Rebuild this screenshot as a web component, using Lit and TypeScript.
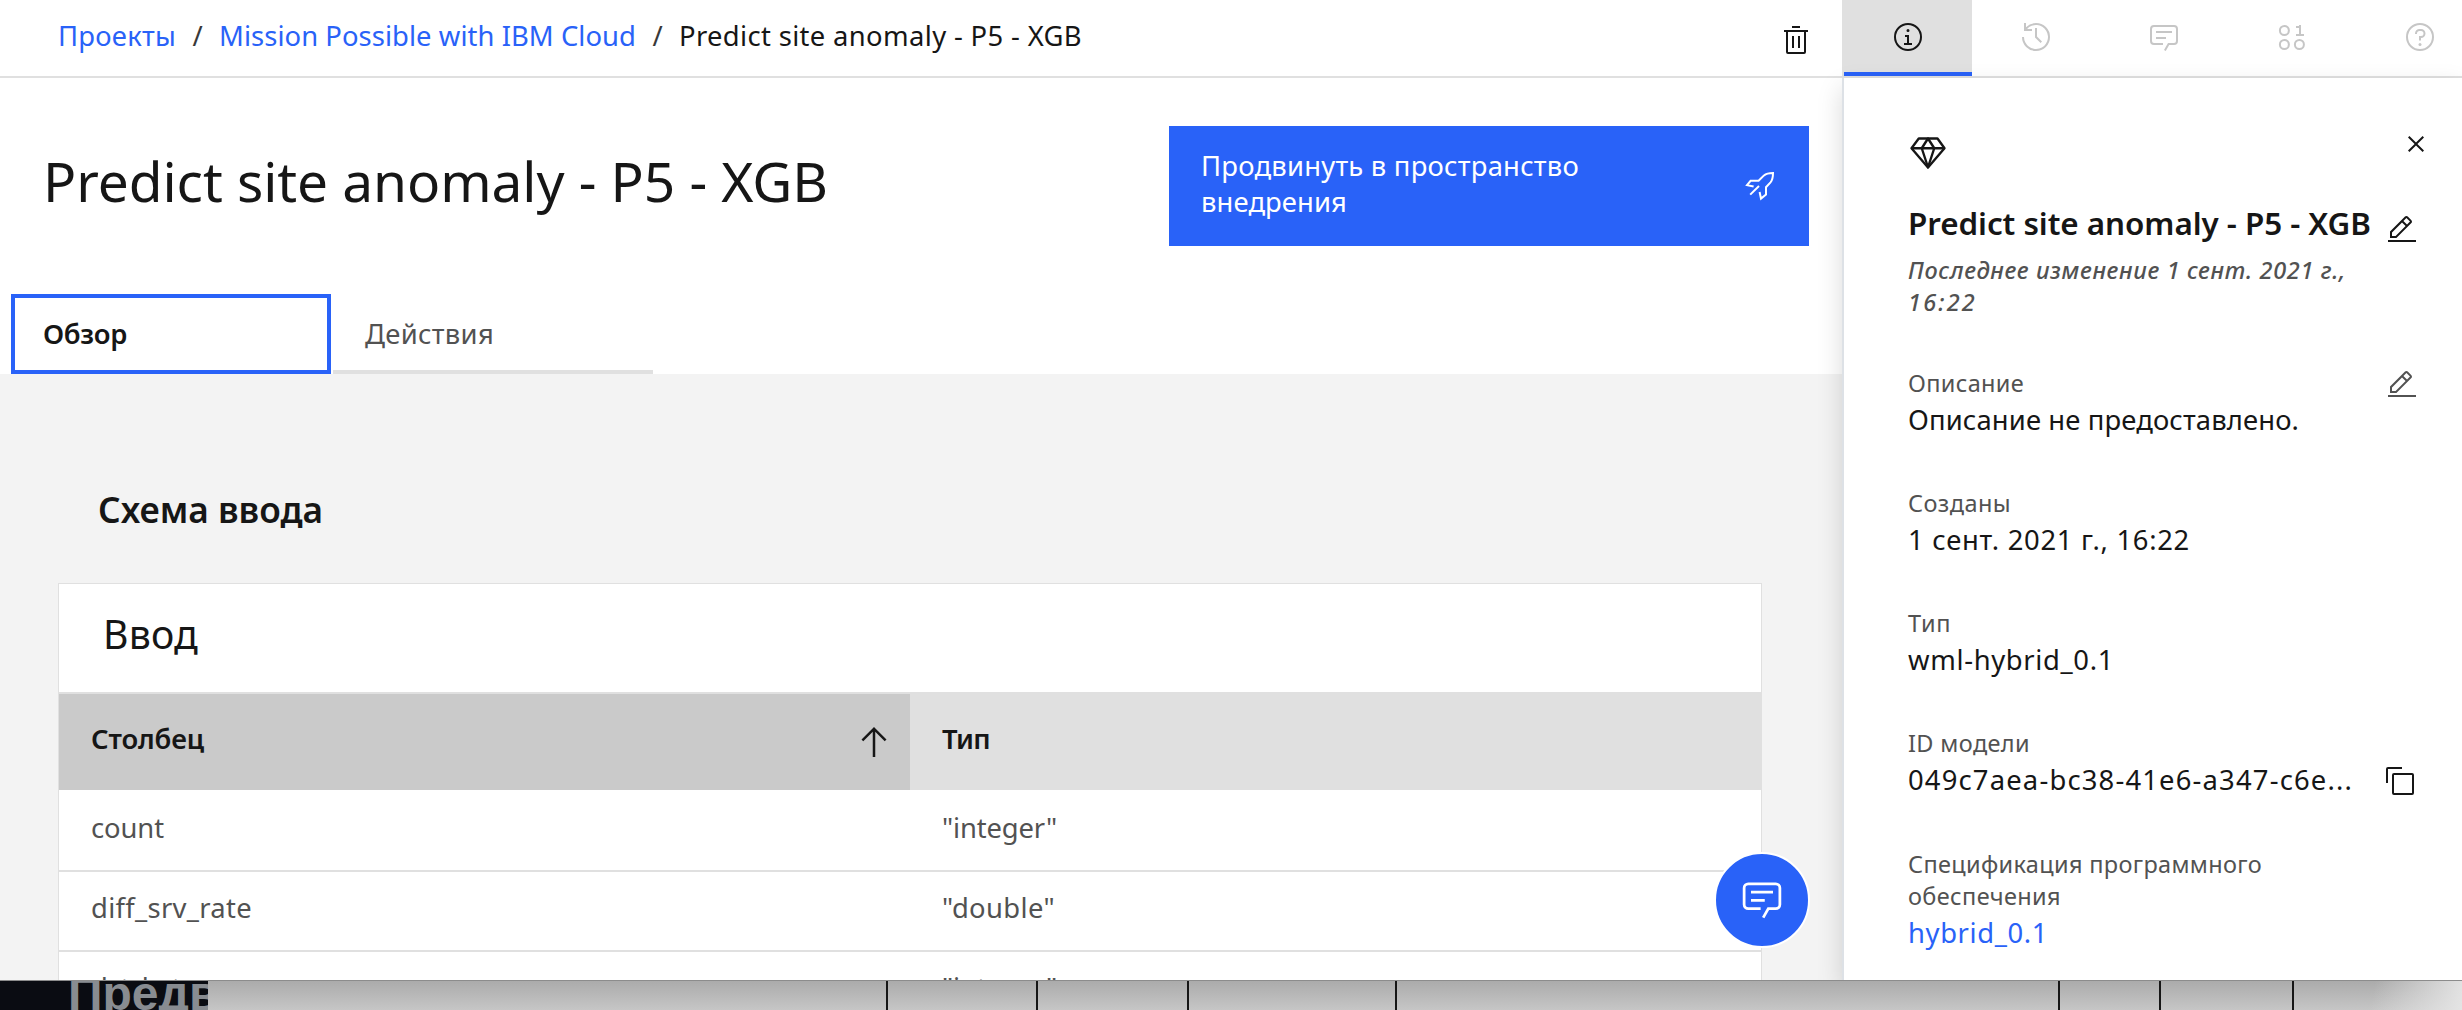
import { LitElement, html, css, svg, SVGTemplateResult } from "lit";
import { customElement, property, query } from "lit/decorators.js";
import { classMap } from "lit/directives/class-map.js";

const icons: Record<string, SVGTemplateResult> = {
  trash: svg`<path d="M12 12h2v12h-2zM18 12h2v12h-2z"/><path d="M4 6v2h2v20a2 2 0 002 2h16a2 2 0 002-2V8h2V6zM8 28V8h16v20zM12 2h8v2h-8z"/>`,
  info: svg`<path d="M17 22v-8h-4v2h2v6h-3v2h8v-2zM16 8a1.5 1.5 0 101.5 1.5A1.5 1.5 0 0016 8z"/><path d="M16 30a14 14 0 1114-14 14 14 0 01-14 14zm0-26a12 12 0 1012 12A12 12 0 0016 4z"/>`,
  history: svg`<path d="M20.59 22L15 16.41V7h2v8.58l5 5.01L20.59 22z"/><path d="M16 2A13.94 13.94 0 006 6.23V2H4v8h8V8H7.08A12 12 0 114 16H2A14 14 0 1016 2z"/>`,
  chat: svg`<path d="M17.74 30L16 29l4-7h6a2 2 0 002-2V8a2 2 0 00-2-2H6a2 2 0 00-2 2v12a2 2 0 002 2h9v2H6a4 4 0 01-4-4V8a4 4 0 014-4h20a4 4 0 014 4v12a4 4 0 01-4 4h-4.84z"/><path d="M8 10h16v2H8zM8 16h10v2H8z"/>`,
  data: svg`<g fill="none" stroke="currentColor" stroke-width="2"><circle cx="8.4" cy="9.5" r="4.5"/><circle cx="8.4" cy="23.5" r="4.5"/><circle cx="23.4" cy="23.5" r="4.5"/></g><path d="M25 13V4h-2v1h-3v2h3v6h-3v2h8v-2z"/>`,
  help: svg`<path d="M16 2a14 14 0 1014 14A14 14 0 0016 2zm0 26a12 12 0 1112-12 12 12 0 01-12 12z"/><circle cx="16" cy="23.5" r="1.5"/><path d="M17 8h-1.5a4.49 4.49 0 00-4.5 4.5v.5h2v-.5a2.5 2.5 0 012.5-2.5H17a2.5 2.5 0 010 5h-2v4.5h2V17a4.5 4.5 0 000-9z"/>`,
  rocket: svg`<g fill="none" stroke="currentColor" stroke-width="2"><path d="M9.6 16.6L3 15.2l3.6-4.4h8L20 5.4Q22.8 3 29 3q0 6.4-2.5 9.4L22 17.2v7.4l-5 4-1.4-6.6"/><path d="M6.2 24.6L15 16"/></g>`,
  gem: svg`<g fill="none" stroke="currentColor" stroke-width="1.9" stroke-linejoin="round"><path d="M8.6 6h15l5.6 7.8L16 29.2 2.8 13.8z"/><path d="M2.8 13.8h26.4M16 6l-5 7.8L16 29l5-15.2z"/></g>`,
  edit: svg`<path d="M2 26h28v2H2zM25.4 9c.8-.8.8-2 0-2.8l-3.6-3.6c-.8-.8-2-.8-2.8 0l-15 15V24h6.4zM20.4 4L24 7.6l-3 3L17.4 7zM6 22v-3.6l10-10 3.6 3.6-10 10z"/>`,
  copy: svg`<path d="M28 10v18H10V10h18m0-2H10a2 2 0 00-2 2v18a2 2 0 002 2h18a2 2 0 002-2V10a2 2 0 00-2-2z"/><path d="M4 18H2V4a2 2 0 012-2h14v2H4z"/>`,
  close: svg`<path d="M24 9.4L22.6 8 16 14.6 9.4 8 8 9.4l6.6 6.6L8 22.6 9.4 24l6.6-6.6 6.6 6.6 1.4-1.4-6.6-6.6z"/>`,
  up: svg`<path d="M16 4L6 14l1.41 1.41L15 7.83V28h2V7.83l7.59 7.58L26 14z"/>`,
};

const icon = (name: string, cls = "") =>
  html`<svg class="icon ${cls}" viewBox="0 0 32 32" fill="currentColor">${icons[name]}</svg>`;

/** One line of text, tracked so that it takes up the given advance width. */
@customElement("tracked-text")
class TrackedText extends LitElement {
  static styles = css`
    :host { display: inline-block; white-space: nowrap; }
  `;
  @property({ type: Number }) width = 0;
  @property() text = "";
  @query("span") span!: HTMLSpanElement;

  updated() {
    this.span.style.letterSpacing = "0";
    const natural = this.span.getBoundingClientRect().width;
    this.span.style.letterSpacing = `${(this.width - natural) / this.text.length}px`;
  }
  render() {
    return html`<span>${this.text}</span>`;
  }
}

const t = (text: string, width: number) =>
  html`<tracked-text .text=${text} .width=${width}></tracked-text>`;

const tools = ["info", "history", "chat", "data", "help"];

const rows: [string, number, string, number][] = [
  ["count", 73, '"integer"', 115],
  ["diff_srv_rate", 161, '"double"', 113],
  ["dst_bytes", 118, '"integer"', 115],
];

interface Detail {
  label: [string, number][];
  value: [string, number];
  labelIcon?: string;
  valueIcon?: string;
  link?: boolean;
}
const details: Detail[] = [
  { label: [["Описание", 116]], value: ["Описание не предоставлено.", 391], labelIcon: "edit" },
  { label: [["Созданы", 103]], value: ["1 сент. 2021 г., 16:22", 282] },
  { label: [["Тип", 43]], value: ["wml-hybrid_0.1", 206] },
  { label: [["ID модели", 122]], value: ["049c7aea-bc38-41e6-a347-c6e...", 445], valueIcon: "copy" },
  { label: [["Спецификация программного", 354], ["обеспечения", 153]], value: ["hybrid_0.1", 140], link: true },
];

@customElement("app-root")
class AppRoot extends LitElement {
  static styles = css`
    :host {
      display: block;
      height: 1010px;
      overflow: hidden;
      background: #fff;
      color: #161616;
      font: 400 27.4px/36px "Noto Sans", sans-serif;
    }
    * { box-sizing: border-box; }
    .icon { display: block; width: 32px; height: 32px; flex: none; }
    .window { height: 980px; display: flex; flex-direction: column; overflow: hidden; }

    .topbar { display: flex; height: 78px; flex: none; border-bottom: 2px solid #e0e0e0; }
    .crumbs { display: flex; align-items: center; width: 1842px; flex: none; padding: 4px 30px 0 58px; }
    .trail { display: flex; align-items: center; flex: 1; padding-bottom: 9px; }
    .link { color: #2962f8; }
    .slash { width: 43px; text-align: center; color: #393939; }
    .tools { display: flex; border-left: 2px solid #e0e0e0; flex: none; }
    .tool { display: flex; width: 128px; height: 76px; align-items: center; justify-content: center; color: #c6c6c6; padding-bottom: 2px; }
    .tool.active { background: #e0e0e0; color: #161616; border-bottom: 4px solid #2962f8; padding-top: 2px; padding-bottom: 0; }

    .body { display: flex; flex: 1; min-height: 0; }
    .main { position: relative; width: 1842px; flex: none; display: flex; flex-direction: column; }
    .hero { display: flex; justify-content: space-between; height: 216px; flex: none; padding: 48px 33px 0 43px; }
    h1 { margin: 0; font-weight: 400; font-size: 55px; line-height: 64px; padding-top: 23px; }
    .promote { display: flex; width: 640px; height: 120px; background: #2962f8; color: #fff; justify-content: space-between; align-items: center; padding: 0 33px 4px 32px; }
    .promote .lines { display: flex; flex-direction: column; }
    .promote .icon { margin-top: 4px; }

    .tabs { display: flex; gap: 2px; height: 80px; flex: none; padding-left: 11px; }
    .tab { display: flex; align-items: center; width: 320px; color: #525252; padding: 3px 0 0 32px; border-bottom: 4px solid #e0e0e0; }
    .tab.active { border: 4px solid #2962f8; color: #161616; font-weight: 600; padding: 0 0 0 28px; }

    .content { flex: 1; min-height: 0; background: #f3f3f3; overflow: hidden; }
    h2 { margin: 0; font-size: 35.3px; line-height: 48px; font-weight: 600; padding: 111px 0 0 98px; }
    .card { width: 1704px; margin: 50px 0 0 58px; border: 1px solid #e0e0e0; background: #fff; }
    .card-title { height: 108px; padding: 22px 0 0 44px; font-size: 39.2px; line-height: 56px; }
    .grid-row { display: grid; grid-template-columns: 851px 1fr; }
    .head { background: #e0e0e0; padding-top: 2px; font-weight: 600; }
    .th { display: flex; align-items: center; justify-content: space-between; height: 96px; padding: 0 16px 0 32px; }
    .th tracked-text { padding-bottom: 7px; }
    .th.sorted { background: #cacaca; }
    .th .icon { width: 40px; height: 40px; }
    .line { height: 80px; border-bottom: 2px solid #e0e0e0; color: #525252; }
    .line:nth-child(3) { height: 82px; padding-top: 2px; }
    .cell { padding: 18px 0 0 32px; }

    .fab { position: absolute; left: 1714px; top: 774px; width: 96px; height: 96px; border-radius: 50%; background: #2962f8; border: 2px solid #fff; color: #fff; display: flex; align-items: center; justify-content: center; }
    .fab .icon { width: 44px; height: 44px; margin-top: -2px; }

    .panel { position: relative; width: 620px; flex: none; background: #fff; border-left: 2px solid #dde1e6; padding: 50px 30px 0 64px; box-shadow: 0 10px 24px rgba(0, 0, 0, 0.15); }
    .panel-top { display: flex; justify-content: space-between; }
    .gem { width: 40px; height: 40px; margin-top: 3px; }
    .panel-line { display: flex; justify-content: space-between; padding-right: 14px; }
    h3 { margin: 0; font-size: 31.4px; line-height: 40px; font-weight: 600; padding-top: 32px; }
    .title-edit { margin-top: 43px; }
    .modified { display: flex; flex-direction: column; font-style: italic; font-weight: 500; font-size: 23.5px; line-height: 32px; color: #525252; padding-top: 8px; }
    .details { display: flex; flex-direction: column; gap: 49.3px; padding-top: 48.5px; }
    .label { display: flex; flex-direction: column; font-size: 23.5px; line-height: 32px; color: #525252; }
    .label-row { color: #525252; }
    .label-row .icon { margin: 2px 0 -2px; }
    .value-row { padding-top: 3px; height: 39px; padding-right: 16px; }
    .value-row .icon { margin-top: 3px; }

    .strip { position: relative; display: flex; height: 30px; border-top: 1px solid #8c8c8c; background: linear-gradient(#ababab, #c6c6c6); overflow: hidden; }
    .strip::after { content: ""; position: absolute; inset: 0 0 0 auto; width: 110px; background: linear-gradient(100deg, transparent 20%, #e4e4e4); }
    .preview { width: 208px; flex: none; overflow: hidden; background: #0a0c12; color: #888c91; font: 700 48px/54px "Liberation Sans", sans-serif; padding-left: 68px; white-space: nowrap; }
    .preview span { display: block; margin-top: -14px; }
    .ticks { display: grid; grid-template-columns: 680px 150px 151px 208px 663px 101px 133px; }
    .tick { border-right: 2px solid #161616; }
  `;

  render() {
    return html`
      <div class="window">
        <div class="topbar">
          <div class="crumbs">
            <div class="trail">
              <span class="link">${t("Проекты", 118)}</span><span class="slash">/</span>
              <span class="link">${t("Mission Possible with IBM Cloud", 417)}</span><span class="slash">/</span>
              <span>${t("Predict site anomaly - P5 - XGB", 403)}</span>
            </div>
            ${icon("trash")}
          </div>
          <div class="tools">
            ${tools.map((name, i) => html`<div class=${classMap({ tool: true, active: i === 0 })}>${icon(name)}</div>`)}
          </div>
        </div>
        <div class="body">
          <div class="main">
            <div class="hero">
              <h1>${t("Predict site anomaly - P5 - XGB", 785)}</h1>
              <div class="promote">
                <div class="lines">${t("Продвинуть в пространство", 378)}${t("внедрения", 146)}</div>
                ${icon("rocket")}
              </div>
            </div>
            <div class="tabs">
              <div class="tab active">${t("Обзор", 84)}</div>
              <div class="tab">${t("Действия", 129)}</div>
            </div>
            <div class="content">
              <h2>${t("Схема ввода", 225)}</h2>
              <div class="card">
                <div class="card-title">${t("Ввод", 95)}</div>
                <div class="grid-row head">
                  <div class="th sorted">${t("Столбец", 113)}${icon("up")}</div>
                  <div class="th">${t("Тип", 48)}</div>
                </div>
                ${rows.map(
                  ([name, nameWidth, type, typeWidth]) => html`<div class="grid-row line">
                    <div class="cell">${t(name, nameWidth)}</div>
                    <div class="cell">${t(type, typeWidth)}</div>
                  </div>`
                )}
              </div>
            </div>
            <div class="fab">${icon("chat")}</div>
          </div>
          <div class="panel">
            <div class="panel-top">${icon("gem", "gem")}${icon("close")}</div>
            <div class="panel-line">
              <h3>${t("Predict site anomaly - P5 - XGB", 463)}</h3>
              ${icon("edit", "title-edit")}
            </div>
            <div class="modified">${t("Последнее изменение 1 сент. 2021 г.,", 438)}${t("16:22", 69)}</div>
            <div class="details">
              ${details.map(
                (d) => html`<div>
                  <div class="panel-line label-row">
                    <div class="label">${d.label.map(([text, w]) => t(text, w))}</div>
                    ${d.labelIcon ? icon(d.labelIcon) : ""}
                  </div>
                  <div class=${classMap({ "panel-line": true, "value-row": true, link: !!d.link })}>
                    ${t(...d.value)}${d.valueIcon ? icon(d.valueIcon) : ""}
                  </div>
                </div>`
              )}
            </div>
          </div>
        </div>
      </div>
      <div class="strip">
        <div class="preview"><span>Предв</span></div>
        <div class="ticks">${Array.from({ length: 7 }, () => html`<i class="tick"></i>`)}</div>
      </div>
    `;
  }
}
